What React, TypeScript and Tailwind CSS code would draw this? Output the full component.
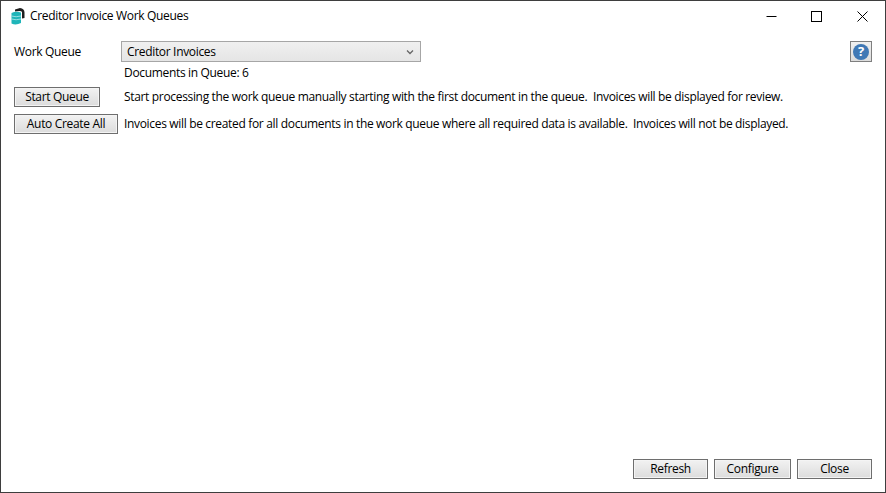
const FONT = "font-['Open_Sans',sans-serif] text-[12px] tracking-[-0.33px] text-black";

const BTN =
  'h-[20px] border border-[#6e6e6e] shadow-[inset_0_0_0_1px_#f4f4f4] bg-gradient-to-b from-[#f2f2f2] to-[#dcdcdc] text-[12px] leading-none text-black flex items-center justify-center';

function AppIcon() {
  return (
    <svg width="14" height="17" viewBox="0 0 14 17">
      <path d="M4 1.5 L9 0 Q13.5 0.5 13.5 4.5 L13.5 10 L11 10.5 L11 4 Q10.5 3 8.5 3 L4 3.5 Z" fill="#1f1f1f" />
      <path d="M0.5 5 Q5 3 10 4.5 L10 15 Q5 17.5 0.5 15.5 Z" fill="#1fb5b9" />
      <path d="M0.5 8 Q5 9.5 10 8 M0.5 11 Q5 12.5 10 11" stroke="#b5e9eb" strokeWidth="0.8" fill="none" />
    </svg>
  );
}

function TitleBar() {
  return (
    <div className="flex h-[30px] shrink-0 items-center pl-[10px]">
      <AppIcon />
      <span className="ml-[5px]">Creditor Invoice Work Queues</span>
      <div className="ml-auto flex items-center">
        <div className="flex h-[30px] w-[45px] items-center justify-center">
          <svg width="11" height="11" viewBox="0 0 11 11"><path d="M0.5 5.5H10.5" stroke="#000" strokeWidth="1" /></svg>
        </div>
        <div className="flex h-[30px] w-[45px] items-center justify-center">
          <svg width="11" height="11" viewBox="0 0 11 11"><rect x="0.5" y="0.5" width="10" height="10" fill="none" stroke="#000" strokeWidth="1" /></svg>
        </div>
        <div className="flex h-[30px] w-[46px] items-center justify-center">
          <svg width="11" height="11" viewBox="0 0 11 11"><path d="M0.5 0.5L10.5 10.5M10.5 0.5L0.5 10.5" stroke="#000" strokeWidth="1" /></svg>
        </div>
      </div>
    </div>
  );
}

export default function App() {
  return (
    <div className={`flex h-[493px] w-[886px] flex-col overflow-hidden border border-[#3e3e3e] bg-white ${FONT}`}>
      <TitleBar />

      <div className="flex flex-1 flex-col pl-[13px] pr-[13px] pt-[10px]">
        <div className="flex items-start">
          <span className="w-[107px] pt-[2px] leading-[18px]">Work Queue</span>
          <div className="flex h-[21px] w-[300px] items-center justify-between border border-[#a6a6a6] bg-gradient-to-b from-[#f0f0f0] to-[#e5e5e5] pl-[5px] pr-[6px]">
            <span>Creditor Invoices</span>
            <svg width="8" height="6" viewBox="0 0 8 6"><path d="M1 1.5L4 4.5L7 1.5" fill="none" stroke="#666" strokeWidth="1.3" /></svg>
          </div>
          <div className="ml-auto flex h-[21px] w-[22px] items-center justify-center border border-[#7f7f7f] bg-gradient-to-b from-[#f0f0f0] to-[#dcdcdc]">
            <div className="flex h-[16px] w-[16px] items-center justify-center rounded-full bg-[#3f78b5] text-[13px] font-bold leading-none text-white">?</div>
          </div>
        </div>

        <div className="ml-[110px] mt-[2px] leading-[18px]">Documents in Queue: 6</div>

        <div className="mt-[5px] flex items-center">
          <button className={`${BTN} w-[86px]`}>Start Queue</button>
          <span className="ml-[24px]">Start processing the work queue manually starting with the first document in the queue.&nbsp; Invoices will be displayed for review.</span>
        </div>

        <div className="mt-[7px] flex items-center">
          <button className={`${BTN} w-[104px]`}>Auto Create All</button>
          <span className="ml-[6px]">Invoices will be created for all documents in the work queue where all required data is available.&nbsp; Invoices will not be displayed.</span>
        </div>

        <div className="mt-auto mb-[13px] flex justify-end gap-[6px]">
          <button className={`${BTN} w-[75px]`}>Refresh</button>
          <button className={`${BTN} w-[77px]`}>Configure</button>
          <button className={`${BTN} w-[75px]`}>Close</button>
        </div>
      </div>
    </div>
  );
}
